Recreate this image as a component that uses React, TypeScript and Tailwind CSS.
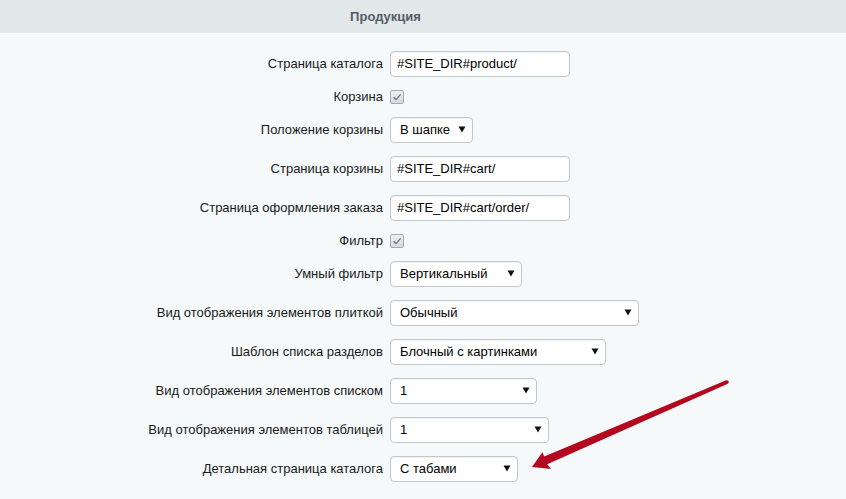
import type { ReactNode } from 'react'

type Field =
  | { label: string; kind: 'text'; value: string; width: number }
  | { label: string; kind: 'check' }
  | { label: string; kind: 'select'; value: string; width: number }

const fields: Field[] = [
  { label: 'Страница каталога', kind: 'text', value: '#SITE_DIR#product/', width: 180 },
  { label: 'Корзина', kind: 'check' },
  { label: 'Положение корзины', kind: 'select', value: 'В шапке', width: 83 },
  { label: 'Страница корзины', kind: 'text', value: '#SITE_DIR#cart/', width: 180 },
  { label: 'Страница оформления заказа', kind: 'text', value: '#SITE_DIR#cart/order/', width: 180 },
  { label: 'Фильтр', kind: 'check' },
  { label: 'Умный фильтр', kind: 'select', value: 'Вертикальный', width: 132 },
  { label: 'Вид отображения элементов плиткой', kind: 'select', value: 'Обычный', width: 249 },
  { label: 'Шаблон списка разделов', kind: 'select', value: 'Блочный с картинками', width: 216 },
  { label: 'Вид отображения элементов списком', kind: 'select', value: '1', width: 147 },
  { label: 'Вид отображения элементов таблицей', kind: 'select', value: '1', width: 159 },
  { label: 'Детальная страница каталога', kind: 'select', value: 'С табами', width: 128 },
]

function Check() {
  return (
    <span className="flex h-[14px] w-[14px] items-center justify-center rounded-[2px] border border-[#a3a9ae] bg-gradient-to-b from-[#eef0f2] to-[#d6dadd]">
      <svg width="10" height="10" viewBox="0 0 10 10" fill="none">
        <path d="M1.5 5.2 L4 7.6 L8.6 2.4" stroke="#6d757c" strokeWidth="1.4" />
      </svg>
    </span>
  )
}

function Box({ width, children }: { width: number; children: ReactNode }) {
  return (
    <div
      className="flex h-[26px] items-center rounded-[4px] border border-[#c3c8cc] bg-white text-[13px] text-black shadow-[inset_0_1px_1px_rgba(0,0,0,0.05)]"
      style={{ width }}
    >
      {children}
    </div>
  )
}

function Control({ f }: { f: Field }) {
  if (f.kind === 'check') return <Check />
  if (f.kind === 'text')
    return (
      <Box width={f.width}>
        <span className="pl-[6px]">{f.value}</span>
      </Box>
    )
  return (
    <Box width={f.width}>
      <span className="flex-1 pl-[9px]">{f.value}</span>
      <svg width="8" height="7" viewBox="0 0 8 7" className="mr-[6px]">
        <path d="M0.5 0.5 H7.5 L4 6.5 Z" fill="#111" />
      </svg>
    </Box>
  )
}

export default function App() {
  return (
    <div className="relative min-h-screen w-[846px] overflow-hidden bg-[#f5f9f9] font-['Liberation_Sans',Arial,sans-serif]">
      <div className="flex h-[33px] w-full bg-[#e0e8ea]">
        <div className="flex w-[771px] items-center justify-center text-[13px] font-bold text-[#535c69]">
          Продукция
        </div>
      </div>

      <div className="pt-[11px]">
        {fields.map((f) => (
          <div
            key={f.label}
            className={`flex items-center gap-[7px] ${f.kind === 'check' ? 'h-[27px]' : 'h-[39px]'}`}
          >
            <div className="w-[383px] text-right text-[13px] text-[#1a1a1a]">{f.label}</div>
            <Control f={f} />
          </div>
        ))}
      </div>

      {/* red pointer to the detail page select */}
      <svg className="pointer-events-none absolute left-0 top-0" width="846" height="499">
        <polygon
          points="726.2,380.2 544.2,456.6 542.4,452.2 532,467 551,469 547.2,464.2 727.8,383.8"
          fill="#b3081f"
        />
        <circle cx="727" cy="382" r="1.8" fill="#b3081f" />
      </svg>
    </div>
  )
}
